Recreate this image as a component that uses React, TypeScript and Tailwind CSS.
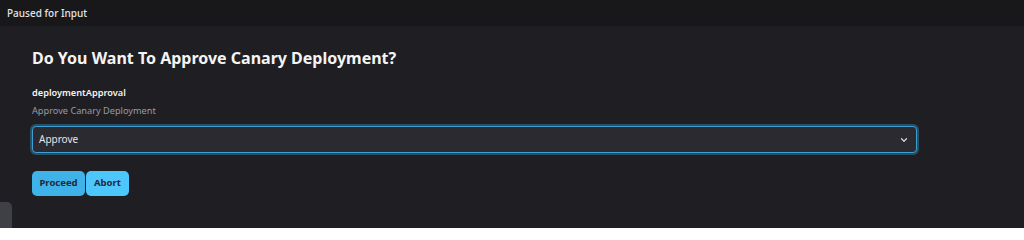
import React from "react";

export default function App() {
  return (
    <div className="w-[1024px] h-[228px] bg-[#1f1f23] text-white overflow-hidden relative" style={{ fontFamily: '"Noto Sans", "Open Sans", sans-serif' }}>
      <div className="h-[26px] bg-[#18181b] flex items-center px-[7px]">
        <span className="text-[10px] font-medium text-[#e4e4e7]">Paused for Input</span>
      </div>
      <div className="pl-[32px] pr-[107px] pt-[20px]">
        <h1 className="text-[16px] font-bold leading-[24px] text-[#f4f4f5]">Do You Want To Approve Canary Deployment?</h1>
        <div className="mt-[16px] text-[9.2px] font-semibold leading-[14px] text-[#f4f4f5]">deploymentApproval</div>
        <div className="mt-[4px] text-[9.2px] leading-[14px] text-[#9a9aa3]">Approve Canary Deployment</div>
        <div className="mt-[8px] h-[27px] rounded-[4px] border border-[#3b9fd4] ring-2 ring-[#2f6f93]/60 bg-[#2b2a31] flex items-center justify-between pl-[6px] pr-[7px]">
          <span className="text-[10px] text-[#e4e4e7]">Approve</span>
          <svg width="10" height="10" viewBox="0 0 24 24" fill="none" stroke="#d4d4d8" strokeWidth="3" strokeLinecap="round" strokeLinejoin="round"><path d="M6 9l6 6 6-6" /></svg>
        </div>
        <div className="mt-[18px] flex">
          <button className="h-[25px] w-[53px] rounded-[5px] bg-[#3fb2ea] text-[9.5px] font-bold text-[#1f2937]">Proceed</button>
          <button className="h-[25px] w-[43px] rounded-[5px] bg-[#4cc6fb] text-[9.5px] font-bold text-[#1f2937] ml-[1px]">Abort</button>
        </div>
      </div>
      <div className="absolute left-[-6px] top-[202px] w-[18px] h-[30px] rounded-[5px] bg-[#3f3f46]" />
    </div>
  );
}
